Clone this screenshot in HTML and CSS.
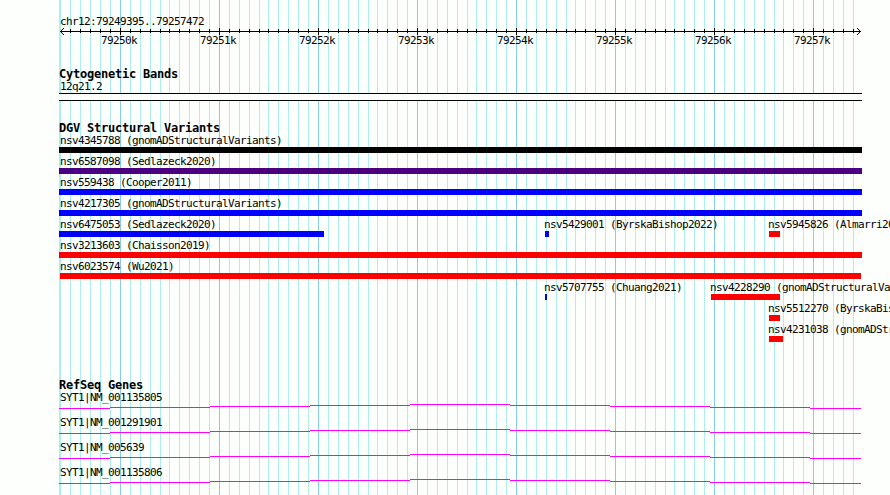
FILE: index.html
```html
<!DOCTYPE html>
<html lang="en">
<head>
<meta charset="utf-8">
<title>chr12:79249395..79257472</title>
<link rel="stylesheet" href="styles.css">
</head>
<body>
<svg class="gridlines" width="890" height="495" shape-rendering="crispEdges" aria-hidden="true">
  <path class="minor" id="grid-minor"/>
  <path class="major" id="grid-major"/>
</svg>
<main class="browser">
  <section class="scale">
    <div class="label">chr12:79249395..79257472</div>
    <svg class="axis" width="890" height="6" shape-rendering="crispEdges" aria-hidden="true">
      <path id="axis-ticks"/>
      <path d="M60 3.5H861M61.5 2v1M61.5 4v1M62.5 1v1M62.5 5v1M63.5 0v1M63.5 6v1M859.5 2v1M859.5 4v1M858.5 1v1M858.5 5v1M857.5 0v1M857.5 6v1"/>
    </svg>
    <div class="ticks"><span>79250k</span><span>79251k</span><span>79252k</span><span>79253k</span><span>79254k</span><span>79255k</span><span>79256k</span><span>79257k</span></div>
  </section>

  <section class="bands">
    <h2>Cytogenetic Bands</h2>
    <div class="label">12q21.2</div>
    <div class="band"></div>
  </section>

  <section class="variants">
    <h2>DGV Structural Variants</h2>
    <div class="row"><div class="feature full black"><span>nsv4345788 (gnomADStructuralVariants)</span><i></i></div></div>
    <div class="row"><div class="feature full indigo"><span>nsv6587098 (Sedlazeck2020)</span><i></i></div></div>
    <div class="row"><div class="feature full blue"><span>nsv559438 (Cooper2011)</span><i></i></div></div>
    <div class="row"><div class="feature full blue"><span>nsv4217305 (gnomADStructuralVariants)</span><i></i></div></div>
    <div class="row">
      <div class="feature full blue partial"><span>nsv6475053 (Sedlazeck2020)</span><i></i></div>
      <div class="feature at-middle blue w4"><span>nsv5429001 (ByrskaBishop2022)</span><i></i></div>
      <div class="feature at-right red w11"><span>nsv5945826 (Almarri2020)</span><i></i></div>
    </div>
    <div class="row"><div class="feature full red"><span>nsv3213603 (Chaisson2019)</span><i></i></div></div>
    <div class="row"><div class="feature full red inset"><span>nsv6023574 (Wu2021)</span><i></i></div></div>
    <div class="row">
      <div class="feature at-middle blue w2"><span>nsv5707755 (Chuang2021)</span><i></i></div>
      <div class="feature at-256k red w69"><span>nsv4228290 (gnomADStructuralVariants)</span><i></i></div>
    </div>
    <div class="row"><div class="feature at-right red w11"><span>nsv5512270 (ByrskaBishop2022)</span><i></i></div></div>
    <div class="row"><div class="feature at-right red w14"><span>nsv4231038 (gnomADStructuralVariants)</span><i></i></div></div>
  </section>

  <section class="genes">
    <h2>RefSeq Genes</h2>
    <div class="gene"><div class="label">SYT1|NM_001135805</div><svg width="890" height="5" shape-rendering="crispEdges"><path id="intron" d="M59 4.5H110M110 3.5H210M210 2.5H310M310 1.5H410M410 .5H510M510 1.5H610M610 2.5H710M710 3.5H810M810 4.5H861"/></svg></div>
    <div class="gene"><div class="label">SYT1|NM_001291901</div><svg width="890" height="5" shape-rendering="crispEdges"><use href="#intron"/></svg></div>
    <div class="gene"><div class="label">SYT1|NM_005639</div><svg width="890" height="5" shape-rendering="crispEdges"><use href="#intron"/></svg></div>
    <div class="gene"><div class="label">SYT1|NM_001135806</div><svg width="890" height="5" shape-rendering="crispEdges"><use href="#intron"/></svg></div>
  </section>
</main>
<script src="scale.js"></script>
</body>
</html>
```
FILE: styles.css
```css
* { box-sizing: border-box; }

body {
  margin: 0;
  width: 890px;
  height: 495px;
  overflow: hidden;
  position: relative;
  background: #fdfffc;
  color: #000;
  font: 11px/13px "DejaVu Sans Mono", monospace;
  letter-spacing: -0.622px;
}

svg { display: block; overflow: visible; fill: none; }

.gridlines { position: absolute; top: 0; left: 0; }
.minor { stroke: #afeeee; }
.major { stroke: #87ceeb; }

.browser {
  position: relative;
  display: flex;
  flex-direction: column;
  height: 495px;
  overflow: hidden;
  padding-top: 15px;
  white-space: nowrap;
}
.browser > section { flex: none; }

h2 {
  margin: 0 0 0 59px;
  height: 13px;
  font-size: 12px;
  line-height: 14px;
  font-weight: bold;
  letter-spacing: -0.224px;
}

.label { height: 13px; padding-left: 60px; }

.axis { stroke: #000; }
.ticks { display: flex; height: 13px; padding-left: 101px; }
.ticks span { flex: 0 0 99px; }

.bands { margin-top: 20px; }
.band {
  width: 803px;
  height: 8px;
  margin-left: 59px;
  border: solid #000;
  border-width: 1px 0;
  background: #fdfffc;
}

.variants { margin-top: 20px; }
.row { display: grid; grid-template-columns: 890px; height: 21px; }
.feature { grid-area: 1 / 1; }
.feature span { display: block; height: 13px; margin-left: -1px; }
.feature i { display: block; height: 6px; background: currentColor; }
.feature span { color: #000; }

.full { margin-left: 59px; }
.full span { margin-left: 1px; }
.full i { width: 803px; }
.partial i { width: 265px; }
.inset i { width: 801px; margin-left: 1px; }
.at-middle { margin-left: 545px; }
.at-256k { margin-left: 711px; }
.at-right { margin-left: 769px; }

.w2 i { width: 2px; }
.w4 i { width: 4px; }
.w11 i { width: 11px; }
.w14 i { width: 14px; }
.w69 i { width: 69px; }

.black { color: #000; }
.indigo { color: #4b0082; }
.blue { color: #00f; }
.red { color: #f00; }

.genes { margin-top: 34px; }
.gene { height: 25px; }
.gene svg { stroke: #f0f; }
```
FILE: scale.js
```js
// One gridline per 100 bases; every tenth line is a major one.
const ORIGIN = 119.93;
const STEP = 9.903;
let minor = "M59.5 0V495M60.5 0V495";
let major = "";
let ticks = "";
for (let k = -5; k <= 74; k++) {
  const x = Math.round(ORIGIN + k * STEP) + 0.5;
  if (k % 10 === 0) {
    major += `M${x} 0V495`;
    ticks += `M${x} 0V7`;
  } else {
    minor += `M${x} 0V495`;
    ticks += `M${x} 1V5`;
  }
}
document.getElementById("grid-minor").setAttribute("d", minor);
document.getElementById("grid-major").setAttribute("d", major);
document.getElementById("axis-ticks").setAttribute("d", ticks);
```
